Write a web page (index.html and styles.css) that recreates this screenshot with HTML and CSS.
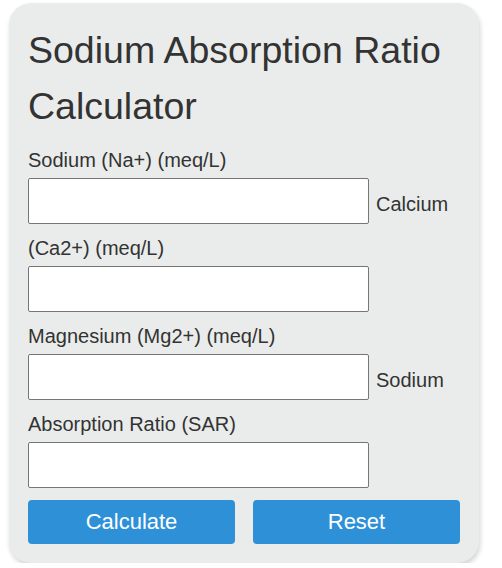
FILE: index.html
```html
<!DOCTYPE html>
<html lang="en">
<head>
  <meta charset="UTF-8" />
  <meta name="viewport" content="width=device-width, initial-scale=1.0" />
  <title>Sodium Absorption Ratio Calculator</title>
  <link rel="stylesheet" href="styles.css">
</head>
<body>
  <div class="calculator">
    <h1 class="title">Sodium Absorption Ratio Calculator</h1>
    <form class="fields" id="sar-form" onsubmit="return false">
      <label for="na">Sodium (Na+) (meq/L)</label>
      <input id="na" class="field" type="text"><label for="ca">Calcium (Ca2+) (meq/L)</label>
      <input id="ca" class="field" type="text"><label for="mg">Magnesium (Mg2+) (meq/L)</label>
      <input id="mg" class="field" type="text"><label for="sar">Sodium Absorption Ratio (SAR)</label>
      <input id="sar" class="field" type="text">
      <div class="buttons">
        <button type="button" class="button" onclick="calculate()">Calculate</button>
        <button type="reset" class="button">Reset</button>
      </div>
    </form>
  </div>

  <script>
    function calculate() {
      const na = parseFloat(document.getElementById('na').value);
      const ca = parseFloat(document.getElementById('ca').value);
      const mg = parseFloat(document.getElementById('mg').value);
      if (isNaN(na) || isNaN(ca) || isNaN(mg)) return;
      // SAR = Na / sqrt((Ca + Mg) / 2)
      const sar = na / Math.sqrt((ca + mg) / 2);
      document.getElementById('sar').value = sar.toFixed(2);
    }
  </script>
</body>
</html>
```

FILE: styles.css
```css
* {
  box-sizing: border-box;
}

html, body {
  margin: 0;
  padding: 0;
  background: #fff;
}

.calculator {
  width: 470px;
  margin: 3px 0 0 9px;
  padding: 19px 19px 19px 19px;
  background: #eaecec;
  border-radius: 22px;
  box-shadow: 1px 3px 5px rgba(0, 0, 0, 0.18);
  color: #333;
  font-family: "Liberation Sans", Arial, sans-serif;
}

.title {
  margin: 0 0 11px;
  font-size: 37.5px;
  line-height: 56px;
  font-weight: normal;
}

.fields {
  margin: 0;
  font-size: 20px;
  line-height: 30px;
}

.field {
  width: 341px;
  height: 46px;
  margin: 3px 7px 9px 0;
  padding: 14px 8px 7px;
  border: 1px solid #767676;
  border-radius: 2px;
  background: #fff;
  font-family: inherit;
  font-size: 20px;
  color: #333;
  vertical-align: baseline;
}

.buttons {
  display: flex;
  gap: 18px;
  margin-top: 3px;
}

.button {
  flex: 1;
  height: 44px;
  border: none;
  border-radius: 4px;
  background: #2e91d7;
  color: #fff;
  font-family: inherit;
  font-size: 22px;
  cursor: pointer;
}

.button:hover {
  background: #2581c4;
}
```
